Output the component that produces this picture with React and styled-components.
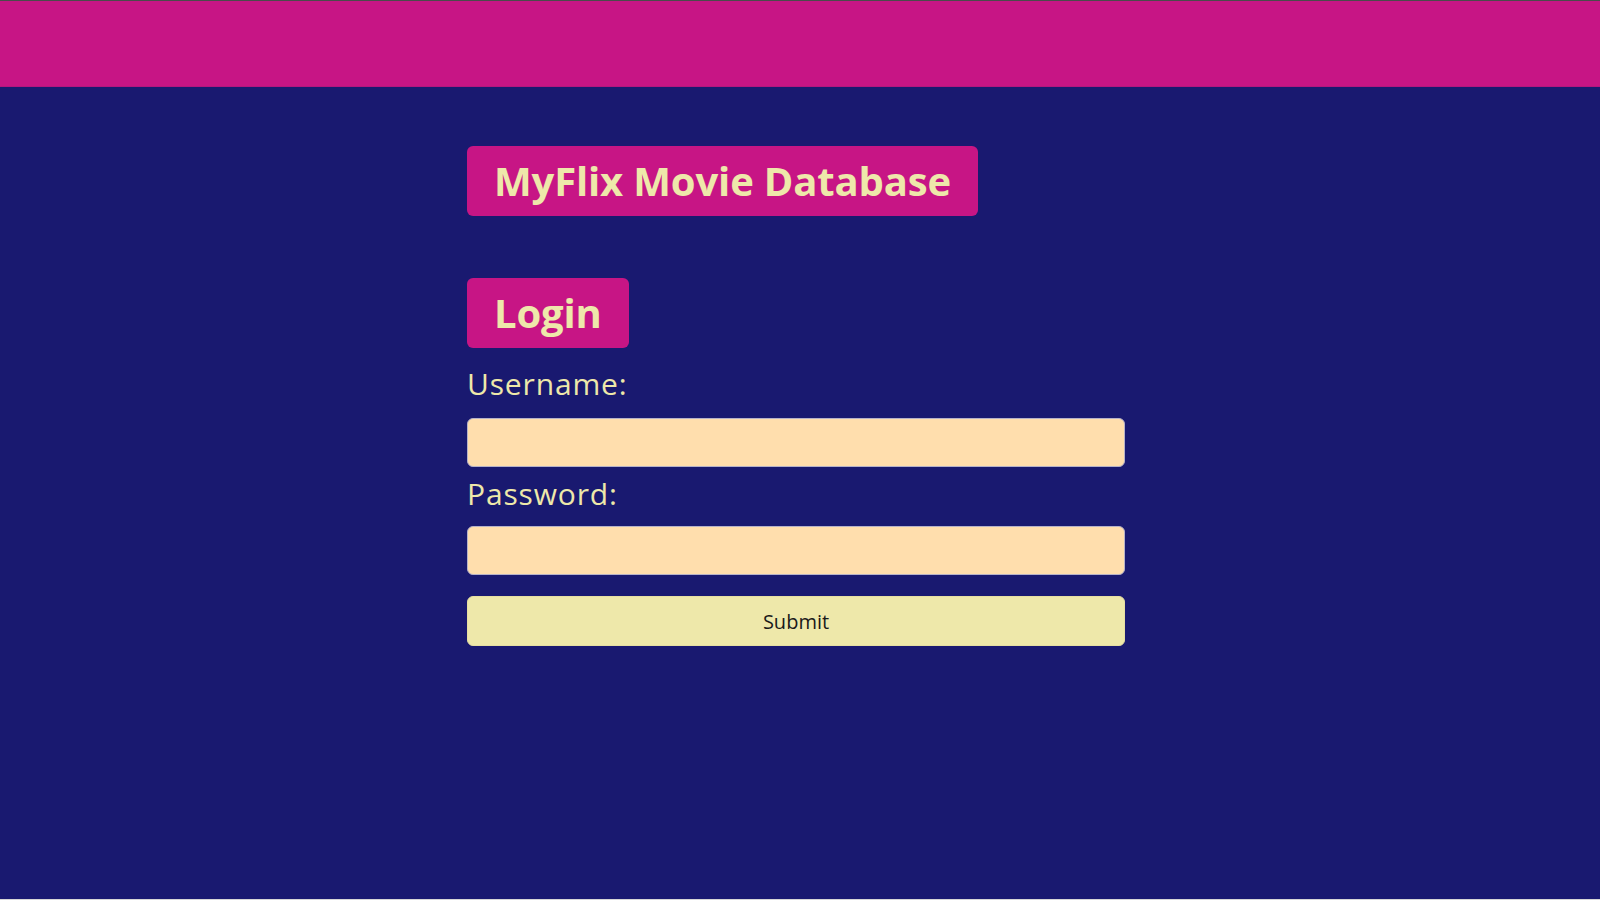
import React from "react";
import styled, { createGlobalStyle } from "styled-components";

const GlobalStyle = createGlobalStyle`
  html, body {
    margin: 0;
    padding: 0;
    background: #d6d6d6;
  }
  body {
    font-family: "Open Sans", "Liberation Sans", sans-serif;
  }
  * { box-sizing: border-box; }
`;

const Page = styled.div`
  height: 899px;
  background: #191970;
  border-top: 1px solid #4a4a4a;
  display: flex;
  flex-direction: column;
`;

const TopBar = styled.header`
  flex: none;
  height: 86px;
  background: #c71585;
  border-bottom: 1px solid #b4167e;
`;

const Main = styled.main`
  width: 666px;
  margin: 0 auto;
  padding-top: 59px;
  display: flex;
  flex-direction: column;
  align-items: flex-start;
`;

const Badge = styled.h1`
  margin: 0 0 ${(p) => p.$gap}px;
  padding: 11px 27px 11px 27px;
  background: #c71585;
  color: #eee8aa;
  border-radius: 6px;
  font-size: 40px;
  font-weight: 700;
  line-height: 48px;
  letter-spacing: -0.15px;
  white-space: nowrap;
`;

const Form = styled.form`
  width: 658px;
  display: flex;
  flex-direction: column;
`;

const Field = styled.div`
  display: flex;
  flex-direction: column;
  margin-top: ${(p) => p.$top}px;
`;

const Label = styled.label`
  color: #eee8aa;
  font-size: 30px;
  font-weight: 400;
  line-height: 45px;
  letter-spacing: 0.85px;
  margin-bottom: ${(p) => p.$bottom}px;
`;

const Input = styled.input`
  height: 49px;
  width: 100%;
  background: #ffdead;
  border: 1px solid #b6b2c8;
  border-radius: 6px;
  padding: 0 16px;
  font-family: inherit;
  font-size: 20px;
  outline: none;
`;

const SubmitButton = styled.button`
  margin-top: 21px;
  height: 50px;
  width: 100%;
  background: #eee8aa;
  border: 1px solid #e6dfa2;
  border-radius: 6px;
  color: #1a1a1a;
  font-family: inherit;
  font-size: 20px;
  font-weight: 400;
  cursor: pointer;
`;

export default function App() {
  return (
    <>
      <GlobalStyle />
      <Page>
        <TopBar />
        <Main>
          <Badge $gap={62}>MyFlix Movie Database</Badge>
          <Badge as="h2" $gap={0}>Login</Badge>
          <Form onSubmit={(e) => e.preventDefault()}>
            <Field $top={13}>
              <Label htmlFor="username" $bottom={12}>Username:</Label>
              <Input id="username" type="text" />
            </Field>
            <Field $top={4}>
              <Label htmlFor="password" $bottom={10}>Password:</Label>
              <Input id="password" type="password" />
            </Field>
            <SubmitButton type="submit">Submit</SubmitButton>
          </Form>
        </Main>
      </Page>
    </>
  );
}
